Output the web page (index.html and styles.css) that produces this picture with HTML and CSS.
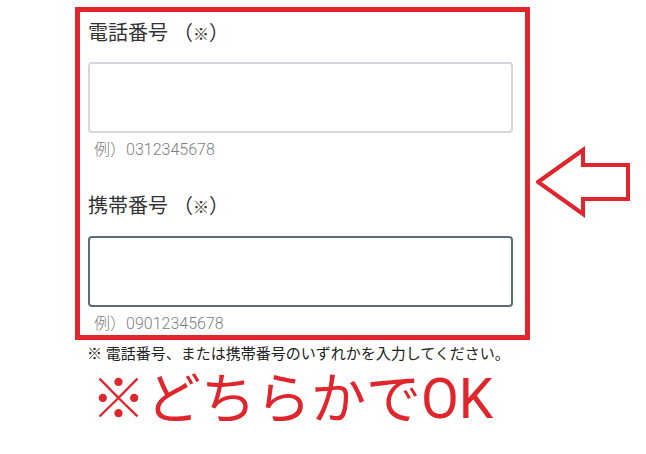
FILE: index.html
```html
<!DOCTYPE html>
<html lang="ja">
<head>
<meta charset="utf-8">
<link rel="stylesheet" href="styles.css">
</head>
<body>
<div class="page">
  <div class="row">
    <div class="frame">
      <div class="label">電話番号 （<span class="mark">※</span>）</div>
      <div class="input light"></div>
      <div class="hint">例）0312345678</div>
      <div class="label second">携帯番号 （<span class="mark">※</span>）</div>
      <div class="input dark"></div>
      <div class="hint">例）09012345678</div>
    </div>
    <svg class="arrow" width="96" height="72" viewBox="0 0 96 72">
      <polygon points="2,36 47,4 47,19 92,19 92,53 47,53 47,68" fill="none" stroke="#e0252c" stroke-width="4" stroke-linejoin="miter"/>
    </svg>
  </div>
  <div class="note">※ 電話番号、または携帯番号のいずれかを入力してください。</div>
  <div class="big">※どちらかでOK</div>
</div>
</body>
</html>
```
FILE: styles.css
```css
html, body {
  margin: 0;
  padding: 0;
  background: #ffffff;
}
body {
  font-family: "Roboto", "Noto Sans CJK JP", sans-serif;
  color: #333333;
}
.page {
  padding-top: 7px;
  padding-left: 75px;
}
.row {
  display: flex;
  align-items: flex-start;
}
.frame {
  box-sizing: border-box;
  width: 455px;
  height: 333px;
  border: 5px solid #e0252c;
  padding: 7px 12px 0 8px;
  overflow: hidden;
}
.label {
  font-size: 20px;
  line-height: 28px;
  font-weight: 400;
  color: #333333;
}
.label .mark {
  font-weight: 700;
  font-size: 16px;
}
.label.second {
  margin-top: 32px;
}
.input {
  box-sizing: border-box;
  height: 71px;
  margin-top: 13px;
  border-radius: 4px;
  background: #ffffff;
}
.input.light {
  border: 2px solid #d3d8de;
}
.input.dark {
  margin-top: 14px;
  border: 2.5px solid #5d6d77;
}
.hint {
  font-size: 16px;
  line-height: 20px;
  font-weight: 300;
  color: #7e7e7e;
  margin-top: 7px;
  padding-left: 6px;
}
.arrow {
  display: block;
  margin-left: 6px;
  margin-top: 139px;
}
.note {
  margin-top: 4px;
  padding-left: 12px;
  font-size: 15px;
  line-height: 20px;
  font-weight: 400;
  color: #222222;
}
.big {
  padding-left: 16px;
  margin-top: 5px;
  font-size: 55px;
  line-height: 60px;
  font-weight: 400;
  color: #e0252c;
}
```
